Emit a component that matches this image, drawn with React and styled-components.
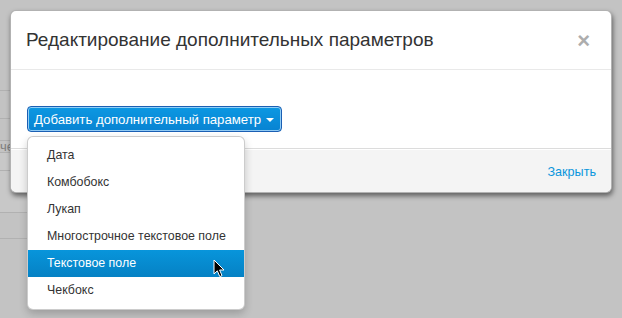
import React from "react";
import styled, { createGlobalStyle } from "styled-components";

const Global = createGlobalStyle`
  html, body { margin: 0; padding: 0; }
  body {
    background: #c3c3c3;
    font-family: "Liberation Sans", Arial, sans-serif;
    -webkit-font-smoothing: antialiased;
  }
`;

const Page = styled.div`
  position: relative;
  width: 622px;
  height: 318px;
  overflow: hidden;
  background: #c3c3c3;
`;

const BgList = styled.div`
  display: flex;
  flex-direction: column;
  width: 240px;
`;

const BgRow = styled.div`
  height: ${(p) => p.$h}px;
  box-sizing: border-box;
  border-bottom: 1px solid #b1b1b1;
  background: ${(p) => (p.$light ? "#c8c8c8" : "transparent")};
  font-size: 13px;
  color: #7f7f7f;
  display: flex;
  align-items: center;
  overflow: hidden;
  white-space: nowrap;
`;

const BgText = styled.span`
  margin-left: 0;
`;

const Modal = styled.div`
  position: absolute;
  left: 10px;
  top: 10px;
  width: 602px;
  box-sizing: border-box;
  background: #fff;
  border: 1px solid rgba(0, 0, 0, 0.3);
  border-radius: 6px;
  box-shadow: 1px 3px 5px rgba(0, 0, 0, 0.5);
  display: flex;
  flex-direction: column;
`;

const Header = styled.div`
  height: 59px;
  box-sizing: border-box;
  border-bottom: 1px solid #e9e9e9;
  display: flex;
  align-items: center;
  justify-content: space-between;
  padding: 0 21px 0 15px;
`;

const Title = styled.h3`
  margin: 0;
  font-size: 19px;
  font-weight: normal;
  color: #333;
`;

const Close = styled.span`
  font-size: 22px;
  font-weight: bold;
  color: #adadad;
  line-height: 1;
  margin-top: 1px;
`;

const Body = styled.div`
  padding: 36px 16px 15px;
  height: 78px;
  box-sizing: border-box;
`;

const DropWrap = styled.div`
  position: relative;
  display: inline-block;
`;

const PrimaryButton = styled.button`
  height: 26px;
  box-sizing: border-box;
  padding: 0 7px 0 6px;
  border: 1px solid #1b5fb3;
  border-radius: 4px;
  box-shadow: inset 0 0 0 1px rgba(190, 225, 255, 0.75);
  background: linear-gradient(#0c98e2, #0883d2);
  color: #fff;
  font-family: "Liberation Sans", Arial, sans-serif;
  font-size: 13.2px;
  display: flex;
  align-items: center;
  gap: 5px;
  cursor: pointer;
`;

const Caret = styled.span`
  display: inline-block;
  width: 0;
  height: 0;
  border-left: 4px solid transparent;
  border-right: 4px solid transparent;
  border-top: 4px solid #fff;
  margin-top: 1px;
`;

const Menu = styled.ul`
  position: absolute;
  left: 0;
  top: 30px;
  width: 218px;
  margin: 0;
  padding: 5px 0;
  list-style: none;
  box-sizing: border-box;
  background: #fff;
  border: 1px solid rgba(0, 0, 0, 0.2);
  border-radius: 6px;
  box-shadow: 0 4px 9px rgba(0, 0, 0, 0.2);
  z-index: 5;
`;

const Item = styled.li`
  height: 27px;
  line-height: 27px;
  padding: 0 19px;
  font-size: 12.4px;
  color: ${(p) => (p.$active ? "#fff" : "#333")};
  background: ${(p) =>
    p.$active ? "linear-gradient(#0895db, #0581c4)" : "transparent"};
  white-space: nowrap;
  position: relative;
`;

const Cursor = styled.svg`
  position: absolute;
  left: 185px;
  top: 9px;
  width: 12px;
  height: 19px;
`;

const Footer = styled.div`
  height: 44px;
  box-sizing: border-box;
  border-top: 1px solid #dcdcdc;
  background: #f4f4f4;
  border-radius: 0 0 6px 6px;
  box-shadow: inset 0 1px 0 #fff;
  display: flex;
  align-items: center;
  justify-content: flex-end;
  padding: 0 15px;
`;

const Link = styled.a`
  color: #0a96dc;
  font-size: 12.6px;
  text-decoration: none;
  margin-top: 2px;
`;

const items = [
  "Дата",
  "Комбобокс",
  "Лукап",
  "Многострочное текстовое поле",
  "Текстовое поле",
  "Чекбокс",
];

export default function App() {
  return (
    <Page>
      <Global />
      <BgList>
        <BgRow $h={91} />
        <BgRow $h={28} />
        <BgRow $h={22} />
        <BgRow $h={12}>
          <BgText>че</BgText>
        </BgRow>
        <BgRow $h={18} $light />
        <BgRow $h={42} $light />
        <BgRow $h={26} />
      </BgList>
      <Modal>
        <Header>
          <Title>Редактирование дополнительных параметров</Title>
          <Close>×</Close>
        </Header>
        <Body>
          <DropWrap>
            <PrimaryButton>
              Добавить дополнительный параметр
              <Caret />
            </PrimaryButton>
            <Menu>
              {items.map((t, i) => (
                <Item key={t} $active={i === 4}>
                  {t}
                  {i === 4 && (
                    <Cursor viewBox="0 0 12 19">
                      <path
                        d="M1 1 L1 15 L4.3 11.8 L6.8 17.6 L9 16.6 L6.6 11 L11 11 Z"
                        fill="#000"
                        stroke="#fff"
                        strokeWidth="1"
                        strokeLinejoin="round"
                      />
                    </Cursor>
                  )}
                </Item>
              ))}
            </Menu>
          </DropWrap>
        </Body>
        <Footer>
          <Link href="#">Закрыть</Link>
        </Footer>
      </Modal>
    </Page>
  );
}
